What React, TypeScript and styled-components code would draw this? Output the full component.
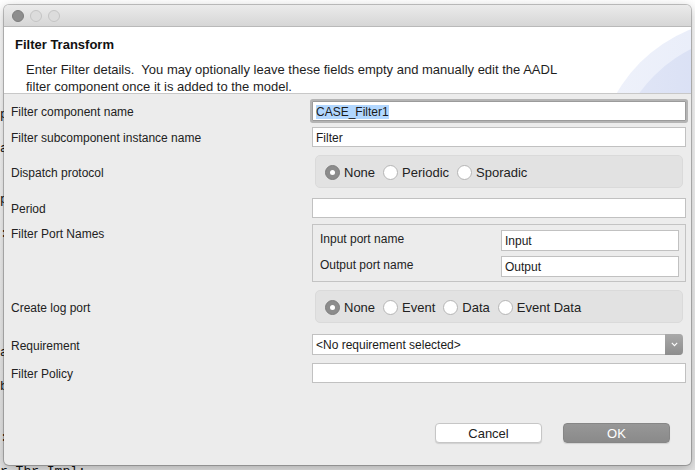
import React from 'react';
import styled, { createGlobalStyle } from 'styled-components';

const GlobalStyle = createGlobalStyle`
  html, body {
    margin: 0;
    padding: 0;
    background: #f4f4f4;
  }
  body {
    font-family: "Liberation Sans", Arial, sans-serif;
    color: #222;
  }
`;

// fragments of the editor that sits behind the dialog
const codeLines = [
  '', '', '', '', '', '', 'p', '', 'a', '', '', 'p', '', ':', '', '', '', '', '',
  '', 'a', '', 'b', '', '', ':', '', 'r Thr Impl;',
];

const Desktop = styled.div`
  position: relative;
  width: 695px;
  height: 470px;
  overflow: hidden;
  background: #f6f6f6;
`;

const Editor = styled.div`
  height: 100%;
  padding-top: 4px;
  box-sizing: border-box;
  display: flex;
  flex-direction: column;
  background: linear-gradient(#ffffff, #e4e4e4);
`;

const CodeLine = styled.div`
  height: 17px;
  flex: none;
  font: 13px/17px "Liberation Mono", "DejaVu Sans Mono", monospace;
  color: #111;
  white-space: pre;
`;

const Window = styled.div`
  position: absolute;
  left: 4px;
  top: 5px;
  width: 687px;
  height: 460px;
  display: flex;
  flex-direction: column;
  background: #ececec;
  border-radius: 5px;
  overflow: hidden;
  box-shadow: 0 0 0 1px rgba(0, 0, 0, 0.22), 0 3px 12px rgba(0, 0, 0, 0.28);
`;

const TitleBar = styled.div`
  height: 22px;
  flex: none;
  display: flex;
  align-items: center;
  gap: 6px;
  padding-left: 8px;
  background: linear-gradient(#ebebeb, #d6d6d6);
  border-bottom: 1px solid #b9b9b9;
  box-sizing: border-box;
`;

const Light = styled.span<{ $active?: boolean }>`
  width: 12px;
  height: 12px;
  border-radius: 50%;
  box-sizing: border-box;
  background: ${(p) => (p.$active ? '#8d8d8d' : '#dcdcdc')};
  border: 1px solid ${(p) => (p.$active ? '#7d7d7d' : '#c4c4c4')};
`;

const Banner = styled.div`
  height: 66px;
  flex: none;
  display: flex;
  background: #ffffff;
  border-bottom: 1px solid #c8c8c8;
  overflow: hidden;
`;

const BannerText = styled.div`
  flex: 1;
  padding: 10px 0 0 11px;
`;

const Heading = styled.div`
  font-weight: bold;
  font-size: 13px;
  line-height: 16px;
  color: #111;
`;

const Description = styled.div`
  margin: 8px 0 0 11px;
  font-size: 13px;
  line-height: 17px;
  color: #1e1e1e;
`;

const DescLine = styled.div`
  white-space: pre;
`;

const Form = styled.div`
  flex: 1;
  padding: 7px 5px 0 7px;
  display: flex;
  flex-direction: column;
`;

const Row = styled.div<{ $mt?: number; $top?: boolean }>`
  display: grid;
  grid-template-columns: 301px 374px;
  align-items: ${(p) => (p.$top ? 'start' : 'center')};
  margin-top: ${(p) => p.$mt ?? 0}px;
`;

const Label = styled.div`
  font-size: 12px;
  line-height: 16px;
  padding-top: 2px;
  color: #222;
`;

const TextField = styled.div<{ $focused?: boolean; $width?: number }>`
  box-sizing: border-box;
  height: ${(p) => (p.$width ? 21 : 20)}px;
  width: ${(p) => (p.$width ? `${p.$width}px` : '100%')};
  padding: 1px 3px 0;
  background: #fff;
  font-size: 12px;
  line-height: ${(p) => (p.$width ? 19 : 18)}px;
  color: #1a1a1a;
  white-space: nowrap;
  border: 1px solid ${(p) => (p.$focused ? '#9b9b9b' : '#c1c1c1')};
  ${(p) => p.$focused && 'box-shadow: 0 0 0 2px #b4b4b4; border-radius: 1px;'}
`;

const Selection = styled.span`
  background: #b2d7ff;
`;

const RadioBox = styled.div`
  height: 33px;
  box-sizing: border-box;
  margin: 0 3px;
  padding: 2px 0 0 9px;
  display: flex;
  align-items: center;
  gap: 8px;
  background: #e2e2e2;
  border: 1px solid #dadada;
  border-radius: 5px;
`;

const RadioItem = styled.label`
  display: flex;
  align-items: center;
  gap: 4px;
  font-size: 13px;
  line-height: 16px;
  color: #222;
`;

const RadioCircle = styled.span<{ $checked?: boolean }>`
  width: 15px;
  height: 15px;
  box-sizing: border-box;
  border-radius: 50%;
  display: flex;
  align-items: center;
  justify-content: center;
  background: ${(p) => (p.$checked ? '#8c8c8c' : '#ffffff')};
  border: 1px solid ${(p) => (p.$checked ? '#7e7e7e' : '#b5b5b5')};
  &::after {
    content: '';
    width: 5px;
    height: 5px;
    border-radius: 50%;
    background: #fff;
    display: ${(p) => (p.$checked ? 'block' : 'none')};
  }
`;

const PortGroup = styled.div`
  box-sizing: border-box;
  height: 58px;
  border: 1px solid #c3c3c3;
  padding: 5px 6px 4px 7px;
  display: grid;
  grid-template-columns: 1fr 178px;
  row-gap: 5px;
  align-items: center;
`;

const InnerLabel = styled(Label)`
  padding-top: 0;
  margin-top: -3px;
`;

const Combo = styled.div`
  box-sizing: border-box;
  width: 371px;
  height: 21px;
  display: flex;
  background: #fff;
  border: 1px solid #c1c1c1;
  border-right: none;
  border-radius: 0 4px 4px 0;
`;

const ComboText = styled.div`
  flex: 1;
  padding: 1px 0 0 3px;
  font-size: 12px;
  line-height: 18px;
  color: #1a1a1a;
`;

const ComboButton = styled.div`
  width: 18px;
  margin: -1px 0;
  display: flex;
  align-items: center;
  justify-content: center;
  background: linear-gradient(#a9a9a9, #8d8d8d);
  border-radius: 0 4px 4px 0;
`;

const Footer = styled.div`
  display: flex;
  justify-content: flex-end;
  gap: 21px;
  padding: 0 21px 22px 0;
`;

const Button = styled.button<{ $primary?: boolean }>`
  width: 107px;
  height: 20px;
  box-sizing: border-box;
  padding: 1px 0 0;
  font-family: "Liberation Sans", Arial, sans-serif;
  font-size: 13px;
  border-radius: 4px;
  color: ${(p) => (p.$primary ? '#ffffff' : '#222222')};
  background: ${(p) => (p.$primary ? 'linear-gradient(#979797, #8a8a8a)' : '#ffffff')};
  border: 1px solid ${(p) => (p.$primary ? '#868686' : '#c6c6c6')};
  box-shadow: 0 1px 1px rgba(0, 0, 0, 0.12);
`;

const BannerArt = () => (
  <svg width="76" height="66" viewBox="0 0 76 66">
    <defs>
      <linearGradient id="outer" x1="0" y1="0" x2="1" y2="0">
        <stop offset="0" stopColor="#eff2fb" />
        <stop offset="1" stopColor="#dfe5f6" />
      </linearGradient>
      <linearGradient id="inner" x1="0" y1="0" x2="1" y2="0">
        <stop offset="0" stopColor="#e2e7f7" />
        <stop offset="1" stopColor="#c8d2ef" />
      </linearGradient>
    </defs>
    <circle cx="130" cy="140" r="148" fill="url(#outer)" />
    <circle cx="140" cy="150" r="143" fill="url(#inner)" />
  </svg>
);

const Radio = ({ label, checked }: { label: string; checked?: boolean }) => (
  <RadioItem>
    <RadioCircle $checked={checked} />
    {label}
  </RadioItem>
);

const App: React.FC = () => {
  return (
    <>
      <GlobalStyle />
      <Desktop>
        <Editor>
          {codeLines.map((line, i) => (
            <CodeLine key={i}>{line}</CodeLine>
          ))}
        </Editor>
        <Window>
          <TitleBar>
            <Light $active />
            <Light />
            <Light />
          </TitleBar>
          <Banner>
            <BannerText>
              <Heading>Filter Transform</Heading>
              <Description>
                <DescLine>{'Enter Filter details.  You may optionally leave these fields empty and manually edit the AADL'}</DescLine>
                <DescLine>filter component once it is added to the model.</DescLine>
              </Description>
            </BannerText>
            <BannerArt />
          </Banner>
          <Form>
            <Row>
              <Label>Filter component name</Label>
              <TextField $focused>
                <Selection>CASE_Filter1</Selection>
              </TextField>
            </Row>
            <Row $mt={6}>
              <Label>Filter subcomponent instance name</Label>
              <TextField>Filter</TextField>
            </Row>
            <Row $mt={8}>
              <Label>Dispatch protocol</Label>
              <RadioBox>
                <Radio label="None" checked />
                <Radio label="Periodic" />
                <Radio label="Sporadic" />
              </RadioBox>
            </Row>
            <Row $mt={10}>
              <Label>Period</Label>
              <TextField />
            </Row>
            <Row $mt={6} $top>
              <Label>Filter Port Names</Label>
              <PortGroup>
                <InnerLabel>Input port name</InnerLabel>
                <TextField $width={178}>Input</TextField>
                <InnerLabel>Output port name</InnerLabel>
                <TextField $width={178}>Output</TextField>
              </PortGroup>
            </Row>
            <Row $mt={8}>
              <Label>Create log port</Label>
              <RadioBox>
                <Radio label="None" checked />
                <Radio label="Event" />
                <Radio label="Data" />
                <Radio label="Event Data" />
              </RadioBox>
            </Row>
            <Row $mt={11}>
              <Label>Requirement</Label>
              <Combo>
                <ComboText>&lt;No requirement selected&gt;</ComboText>
                <ComboButton>
                  <svg width="7" height="5" viewBox="0 0 7 5">
                    <path d="M0.8 0.8 L3.5 3.6 L6.2 0.8" fill="none" stroke="#ffffff" strokeWidth="1.1" />
                  </svg>
                </ComboButton>
              </Combo>
            </Row>
            <Row $mt={8}>
              <Label>Filter Policy</Label>
              <TextField />
            </Row>
          </Form>
          <Footer>
            <Button>Cancel</Button>
            <Button $primary>OK</Button>
          </Footer>
        </Window>
      </Desktop>
    </>
  );
};

export default App;
